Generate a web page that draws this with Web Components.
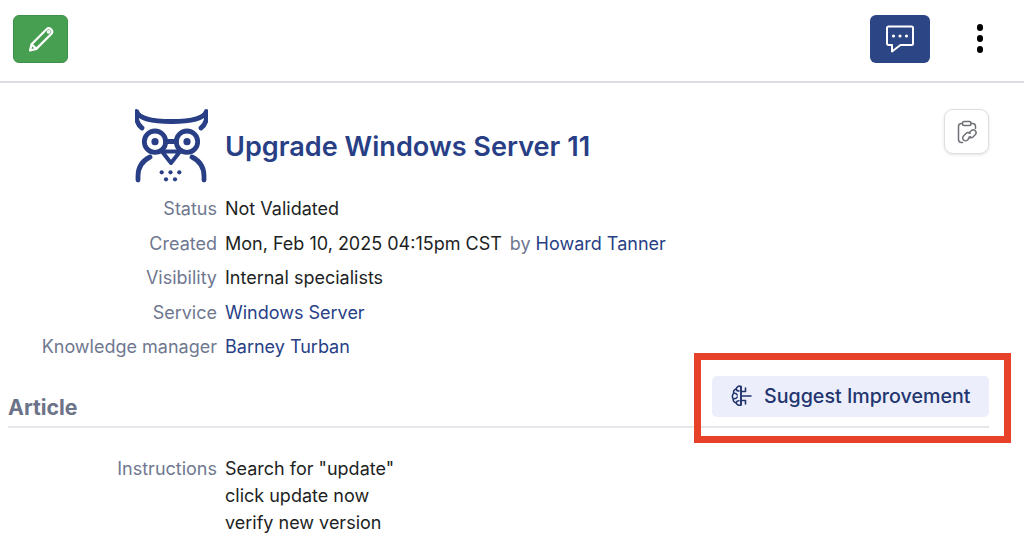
<!DOCTYPE html>
<html lang="en">
<head>
<meta charset="utf-8">
<title>Upgrade Windows Server 11</title>
<style>
  html, body { margin: 0; background: #fff; }
  body { width: 1024px; height: 553px; overflow: hidden; position: relative; font-family: Inter, "Liberation Sans", sans-serif; }
</style>
</head>
<body>
<app-toolbar></app-toolbar>
<kb-page>
  <kb-row label="Status">Not Validated</kb-row>
  <kb-row label="Created">Mon, Feb 10, 2025 04:15pm CST<span class="by">by</span><a>Howard Tanner</a></kb-row>
  <kb-row label="Visibility">Internal specialists</kb-row>
  <kb-row label="Service"><a>Windows Server</a></kb-row>
  <kb-row label="Knowledge manager"><a>Barney Turban</a></kb-row>
</kb-page>
<kb-section title="Article">
  <kb-row label="Instructions" multi>Search for "update"<br>click update now<br>verify new version</kb-row>
</kb-section>
<red-mark></red-mark>

<script>
class AppToolbar extends HTMLElement {
    constructor() {
        super();
        this.attachShadow({mode: 'open'});
    }

    connectedCallback() {
        this.shadowRoot.innerHTML = `
      <style>
        :host {
          display: flex;
          align-items: center;
          box-sizing: border-box;
          height: 83px;
          padding: 0 41px 4px 13px;
          border-bottom: 2px solid #dcdde3;
        }
        button {
          display: flex;
          align-items: center;
          justify-content: center;
          height: 48px;
          padding: 0;
          border-radius: 6px;
        }
        .edit { width: 55px; background: #479f52; border: 1px solid #3f8f4a; }
        .chat { width: 60px; background: #2c4584; border: 0; margin-left: auto; }
        .more { display: flex; flex-direction: column; gap: 4.500px; margin-left: 47px; }
        .more i { width: 6.500px; height: 6.500px; border-radius: 50%; background: #000; }
      </style>
      <button class="edit" aria-label="Edit">
        <svg width="28" height="28" viewBox="0 0 28 28" fill="none" stroke="#fff" stroke-width="2.200" stroke-linejoin="round" stroke-linecap="round">
          <path d="M3 25.500l1.600-6.300L19.800 4c1.100-1.100 2.700-1.100 3.800 0l.9.900c1.100 1.100 1.100 2.700 0 3.800L9.300 23.900z"/>
          <path d="M4.600 19.200l4.700 4.700"/>
          <circle cx="21.700" cy="6.800" r=".8"/>
        </svg>
      </button>
      <button class="chat" aria-label="Comments">
        <svg width="30" height="30" viewBox="0 0 30 30" fill="none" stroke="#fff" stroke-width="2" stroke-linejoin="round">
          <path d="M3.500 2.500h23c.8 0 1.500.7 1.500 1.500v15.500c0 .8-.7 1.500-1.500 1.500H15.500L7 27.500V21H3.500c-.8 0-1.500-.7-1.500-1.500V4c0-.8.7-1.500 1.500-1.500z"/>
          <circle cx="8.500" cy="12" r="1.600" fill="#fff" stroke="none"/>
          <circle cx="15" cy="12" r="1.600" fill="#fff" stroke="none"/>
          <circle cx="21.500" cy="12" r="1.600" fill="#fff" stroke="none"/>
        </svg>
      </button>
      <div class="more" aria-label="More"><i></i><i></i><i></i></div>
    `;
    }
}

class KbPage extends HTMLElement {
    constructor() {
        super();
        this.attachShadow({mode: 'open'});
    }

    connectedCallback() {
        this.shadowRoot.innerHTML = `
      <style>
        :host { display: block; padding: 26px 35px 0 8px; }
        .head { display: flex; align-items: flex-start; padding-left: 127px; height: 86px; }
        .owl { width: 73px; height: 74px; flex: none; }
        h1 {
          margin: 0 0 0 17px;
          padding-top: 20px;
          font: 600 27.100px/36px Inter, "Liberation Sans", sans-serif;
          color: #283f86;
          flex: 1;
        }
        .copy {
          display: flex;
          align-items: center;
          justify-content: center;
          box-sizing: border-box;
          width: 45px;
          height: 45px;
          background: #fff;
          border: 1.500px solid #dedfe3;
          border-radius: 9px;
          box-shadow: 0 1px 3px rgba(30, 35, 60, .12);
        }
      </style>
      <div class="head">
        <svg class="owl" viewBox="10 10 73 74" fill="none" stroke="#283f86" stroke-width="4.800" stroke-linecap="round" stroke-linejoin="round" aria-label="Owl logo">
          <path d="M17 29c-5-3.500-6.500-10.500-5.300-16.500 1.800 6 13 10 34.800 10s33-4 34.800-10c1.200 6-.3 13-5.300 16.500"/>
          <circle cx="30" cy="42.700" r="10.700"/>
          <circle cx="62" cy="42.700" r="10.700"/>
          <path d="M40.500 42.500h11"/>
          <circle cx="30" cy="42.700" r="3.600" fill="#283f86" stroke="none"/>
          <circle cx="62" cy="42.700" r="3.600" fill="#283f86" stroke="none"/>
          <path d="M37 52.500h18l-9 11.500z" stroke-width="4"/>
          <path d="M13 81v-4c0-8 4-15 12-19M79 81v-4c0-8-4-15-12-19"/>
          <g fill="#283f86" stroke="none">
            <circle cx="36.700" cy="73.300" r="2.100"/><circle cx="45.500" cy="73.300" r="2.100"/><circle cx="54.300" cy="73.300" r="2.100"/>
            <circle cx="41" cy="80.300" r="2.100"/><circle cx="50" cy="80.300" r="2.100"/>
          </g>
        </svg>
        <h1>Upgrade Windows Server 11</h1>
        <div class="copy" aria-label="Copy link">
          <svg width="24" height="24" viewBox="0 0 24 24" fill="none" stroke="#6f7178" stroke-width="1.500" stroke-linecap="round" stroke-linejoin="round">
            <rect x="7.500" y="1.500" width="8.500" height="4" rx="1.500"/>
            <path d="M7.500 3.500H6.500a3 3 0 0 0-3 3v13a3 3 0 0 0 3 3h1M16 3.500h1.500a3 3 0 0 1 3 3v2"/>
            <path d="M14 13l2.200-2.200a2.800 2.800 0 0 1 4 4l-2.200 2.200a2.800 2.800 0 0 1-4 0"/>
            <path d="M15.500 16.500l-3 3.500a2.800 2.800 0 0 1-4-4l2.700-2.700a2.800 2.800 0 0 1 4 0"/>
          </svg>
        </div>
      </div>
      <slot></slot>
    `;
    }
}

class KbRow extends HTMLElement {
    constructor() {
        super();
        this.attachShadow({mode: 'open'});
    }

    connectedCallback() {
        this.shadowRoot.innerHTML = `
      <style>
        :host {
          display: grid;
          grid-template-columns: 209px 1fr;
          column-gap: 8px;
          height: 34.600px;
          font: 400 18px/27px Inter, "Liberation Sans", sans-serif;
          color: #1d1f24;
        }
        :host([multi]) { height: auto; }
        .label { text-align: right; color: #6f7890; }
        ::slotted(a) { color: #283f86; }
        ::slotted(.by) { color: #6f7890; margin: 0 5px 0 8px; }
      </style>
      <div class="label">${this.getAttribute('label')}</div>
      <div class="value"><slot></slot></div>
    `;
    }
}

class KbSection extends HTMLElement {
    constructor() {
        super();
        this.attachShadow({mode: 'open'});
    }

    connectedCallback() {
        this.shadowRoot.innerHTML = `
      <style>
        :host { display: block; padding: 0 35px 0 8px; margin-top: -2px; }
        .bar {
          display: flex;
          align-items: flex-start;
          justify-content: space-between;
          height: 62px;
          box-sizing: border-box;
          padding-top: 10px;
          border-bottom: 2px solid #e6e7eb;
          margin-bottom: 27px;
        }
        h2 {
          margin: 17px 0 0;
          font: 700 21.300px/28px Inter, "Liberation Sans", sans-serif;
          color: #6c7388;
        }
        button {
          display: flex;
          align-items: center;
          gap: 10px;
          box-sizing: border-box;
          width: 277px;
          height: 41px;
          padding: 0 0 0 18px;
          border: 0;
          border-radius: 5px;
          background: #eceffb;
          color: #23356f;
          font: 500 19.650px/28px Inter, "Liberation Sans", sans-serif;
          white-space: nowrap;
        }
      </style>
      <div class="bar">
        <h2>${this.getAttribute('title')}</h2>
        <button>
          <svg width="24" height="24" viewBox="0 0 24 24" fill="none" stroke="#23356f" stroke-width="1.600" stroke-linecap="round" stroke-linejoin="round">
            <path d="M11 2.500c-2.500-1-4.500.5-4.800 2.500C4 5.500 3 7.500 3.800 9.300 2.200 10.500 1.800 13 3.300 14.700c-.5 2 .8 3.800 2.800 4.100.6 2 2.800 3 4.900 2.200z"/>
            <path d="M11 2.500V21M11 7.500h4.500V4M11 12h10M11 16.500h4.500V20M4 9.300c1.500-.3 2.500.3 3.200 1.700M3.300 14.700c1.500.3 3 0 3.900-1.700M6.200 5c.3 1.400 1.200 2 2.800 2M6.100 18.800c.3-1.300 1.300-2 2.900-2"/>
          </svg>
          Suggest Improvement
        </button>
      </div>
      <slot></slot>
    `;
    }
}

// cadre rouge posé par-dessus la capture
class RedMark extends HTMLElement {
    constructor() {
        super();
        this.attachShadow({mode: 'open'});
    }

    connectedCallback() {
        this.shadowRoot.innerHTML = `
      <style>
        :host {
          position: absolute;
          left: 694px;
          top: 353px;
          width: 317px;
          height: 90px;
          box-sizing: border-box;
          border: 7px solid #e8412a;
        }
      </style>
    `;
    }
}

customElements.define('app-toolbar', AppToolbar);
customElements.define('kb-page', KbPage);
customElements.define('kb-row', KbRow);
customElements.define('kb-section', KbSection);
customElements.define('red-mark', RedMark);
</script>
</body>
</html>
